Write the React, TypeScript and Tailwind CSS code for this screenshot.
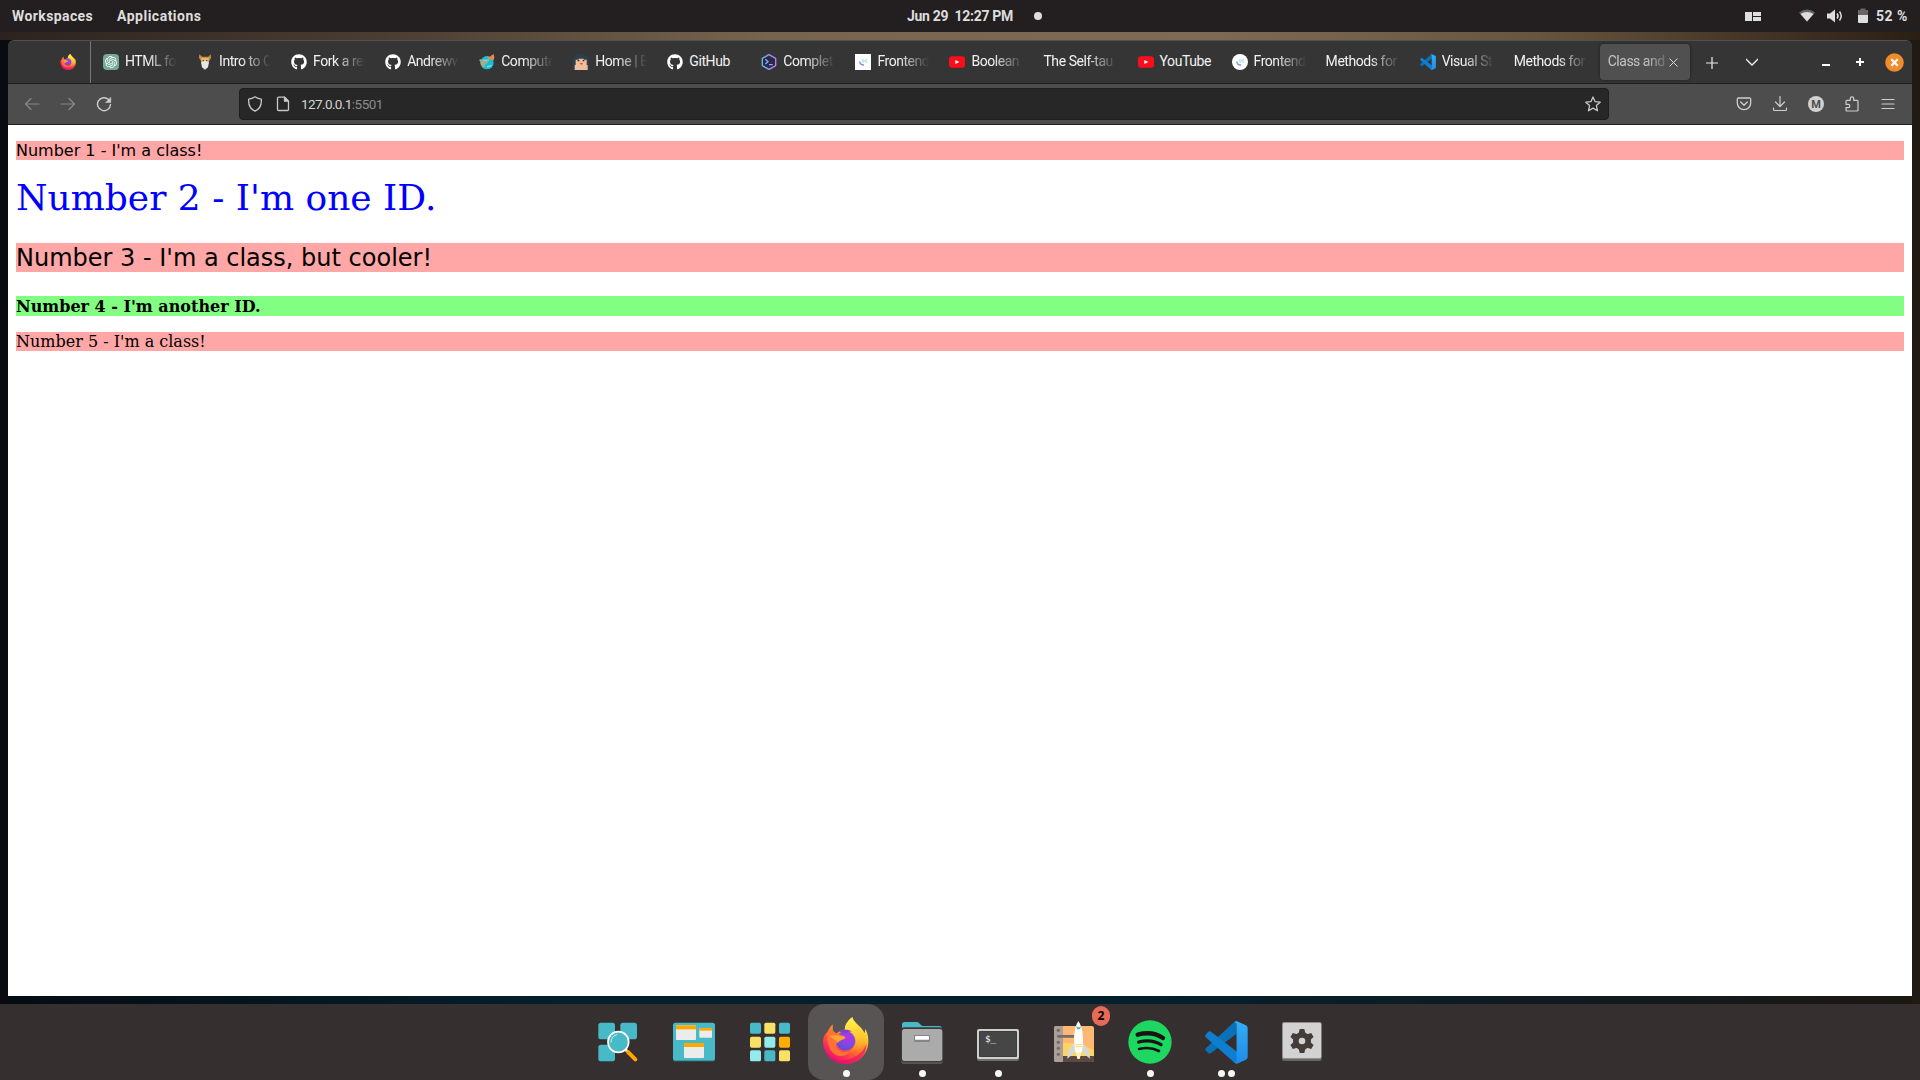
import React from "react";
import { FaGithub } from "react-icons/fa";
import { SiOpenai } from "react-icons/si";

const ui = "font-['Roboto',sans-serif]";

function FirefoxLogo({ className }: { className: string }) {
  return (
    <svg className={className} viewBox="758 82 140 140">
      <defs>
        <linearGradient id="ffBody" x1="0.85" y1="0.1" x2="0.25" y2="0.95">
          <stop offset="0" stopColor="#fff44f" />
          <stop offset="0.3" stopColor="#ffb62b" />
          <stop offset="0.58" stopColor="#ff6b2c" />
          <stop offset="0.82" stopColor="#ff2d52" />
          <stop offset="1" stopColor="#e3107a" />
        </linearGradient>
        <radialGradient id="ffGlobe" cx="0.6" cy="0.3" r="0.75">
          <stop offset="0" stopColor="#b833e1" />
          <stop offset="0.5" stopColor="#8546e8" />
          <stop offset="1" stopColor="#5c4fd0" />
        </radialGradient>
        <linearGradient id="ffFlame" x1="0.5" y1="0" x2="0.6" y2="1">
          <stop offset="0" stopColor="#fff44f" />
          <stop offset="0.6" stopColor="#ffc52e" />
          <stop offset="1" stopColor="#ff9528" stopOpacity="0.2" />
        </linearGradient>
      </defs>
      <path d="M848 83C832 95 826 108 826 120C815 121 806 126 799 133L790 121L790 104C783 109 778 117 775 125C765 133 761 145 761 156C762 194 792 222 828 222C866 222 894 194 896 158C897 140 892 125 886 117C887 124 886 128 884 130C878 112 855 104 848 83Z" fill="url(#ffBody)" />
      <path d="M848 83C832 95 826 108 826 120C846 123 859 136 859 155C859 168 850 181 838 188C866 188 892 160 884 130C878 112 855 104 848 83Z" fill="url(#ffFlame)" />
      <circle cx="828" cy="153" r="29" fill="url(#ffGlobe)" />
      <path d="M810 126C816 120 835 117 848 126C839 124 832 127 829 130Z" fill="#7b3fd6" />
      <path d="M775 125C782 121 790 121 799 130C806 133 814 136 822 139C828 140 829 144 825 147C817 150 810 153 806 158C798 160 798 168 803 175C812 187 829 190 842 183C830 204 796 203 784 181C775 164 770 142 775 125Z" fill="#ff7139" />
      <path d="M781 139C792 134 804 137 822 139C828 140 829 144 825 147C817 150 810 153 806 158C799 153 791 145 781 139Z" fill="#ffa52d" />
      <path d="M764 176C778 207 812 217 841 207C866 199 884 181 890 161C892 196 864 222 828 222C797 222 771 203 764 176Z" fill="#e5106f" opacity="0.65" />
    </svg>
  );
}

function CodeLogo({ className, id }: { className: string; id: string }) {
  return (
    <svg className={className} viewBox="734 92 128 128">
      <defs>
        <linearGradient id={id} x1="0" y1="0" x2="0" y2="1">
          <stop offset="0" stopColor="#33aef5" />
          <stop offset="1" stopColor="#1f8be8" />
        </linearGradient>
      </defs>
      <path d="M829 93L828 130L752 187Q748 190 744 187L736 180Q733 176 737 172L821 95Q825 91 829 93Z" fill="#0a70b8" />
      <path d="M752 124L830 184L829 219Q824 219 820 215L737 141Q733 137 736 133L744 124Q748 121 752 124Z" fill="#0e7fd0" />
      <path d="M829 93L856 105Q861 108 861 113V199Q861 204 856 207L829 219Q824 219 820 215Q828 218 828 209V103Q828 95 820 97Q824 92 829 93Z" fill={`url(#${id})`} />
    </svg>
  );
}

const YouTubeMark = () => (
  <svg className="h-4 w-4" viewBox="0 0 48 48">
    <rect x="0" y="7" width="48" height="34" rx="9" fill="#fc0d1b" />
    <path d="M19 18L31 24L19 30Z" fill="#fff" />
  </svg>
);

const FrontMark = ({ round }: { round: boolean }) => (
  <svg className="h-4 w-4" viewBox="0 0 48 48">
    <rect width="48" height="48" rx={round ? 24 : 0} fill="#fff" />
    <path d="M14 22Q15 33 27 33" fill="none" stroke="#8b93d8" strokeWidth="4" />
    <path d="M24 15V27M36 16L30 21L36 26" fill="none" stroke="#a5e4ea" strokeWidth="4" />
  </svg>
);

const marks: Record<string, React.ReactNode> = {
  ai: (
    <span className="flex h-4 w-4 items-center justify-center rounded-sm bg-[#74a99b] text-white">
      <SiOpenai className="h-3 w-3" />
    </span>
  ),
  odin: (
    <svg className="h-4 w-4" viewBox="0 0 48 48">
      <path d="M7 1L15 8H34L41 1L42 12L36 22H13L6 12Z" fill="#c9913f" />
      <path d="M13 12H35V28H13Z" fill="#e9b66c" />
      <path d="M12 24L24 20L36 24L33 40L24 47L15 40Z" fill="#e8e6e3" />
      <path d="M17 20H21M27 20H31" stroke="#4a3828" strokeWidth="3" />
    </svg>
  ),
  gh: <FaGithub className="h-4 w-4 text-white" />,
  planet: (
    <svg className="h-4 w-4" viewBox="0 0 48 48">
      <circle cx="24" cy="26" r="20" fill="#1fb9d2" />
      <path d="M4 20Q14 12 24 20L27 27L19 30L17 40Q3 38 4 20Z" fill="#a8ad86" />
      <path d="M14 20L30 18M24 39L38 34" stroke="#5fe5ef" strokeWidth="4" />
      <path d="M25 7L32 9L38 4L44 0L46 10L44 19L27 15Z" fill="#e8894a" />
      <circle cx="4" cy="19" r="3" fill="#9ab7b0" />
    </svg>
  ),
  face: (
    <svg className="h-4 w-4" viewBox="0 0 48 48">
      <path d="M0 48V20Q2 0 24 0Q46 0 48 20V48Z" fill="#2b404f" />
      <path d="M8 17H17V14H32V17H41V33H44V48H5V33H8Z" fill="#f0bd9d" />
      <path d="M14 20H19M29 20H34" stroke="#2a2725" strokeWidth="4" />
      <path d="M20 27H30L25 33Z" fill="#d9502b" />
    </svg>
  ),
  hex: (
    <svg className="h-4 w-4" viewBox="0 0 48 48">
      <defs>
        <linearGradient id="hexStroke">
          <stop offset="0" stopColor="#67b8ee" />
          <stop offset="1" stopColor="#c77af0" />
        </linearGradient>
      </defs>
      <path d="M24 2L44 13V35L24 46L4 35V13Z" fill="#272b45" stroke="url(#hexStroke)" strokeWidth="4" strokeLinejoin="round" />
      <path d="M13 16L21 23L13 30M24 32H35" fill="none" stroke="#9aa5f0" strokeWidth="4" />
    </svg>
  ),
  yt: <YouTubeMark />,
  fsq: <FrontMark round={false} />,
  fround: <FrontMark round />,
  code: <CodeLogo className="h-4 w-4" id="codeSmall" />,
};

const tabs: { icon?: string; title: string; fits?: boolean }[] = [
  { icon: "ai", title: "HTML for" },
  { icon: "odin", title: "Intro to C" },
  { icon: "gh", title: "Fork a rep" },
  { icon: "gh", title: "Andreww" },
  { icon: "planet", title: "Compute" },
  { icon: "face", title: "Home | B" },
  { icon: "gh", title: "GitHub", fits: true },
  { icon: "hex", title: "Complet" },
  { icon: "fsq", title: "Frontend" },
  { icon: "yt", title: "Boolean" },
  { title: "The Self-tau" },
  { icon: "yt", title: "YouTube", fits: true },
  { icon: "fround", title: "Frontend" },
  { title: "Methods for" },
  { icon: "code", title: "Visual St" },
  { title: "Methods for" },
];

function TopBar() {
  return (
    <header className={`${ui} grid h-8 shrink-0 grid-cols-3 items-center bg-[#231f20] text-[14px] font-bold text-[#dedede]`}>
      <div className="flex gap-6 pl-3">
        <span className="w-[81px] tracking-[0.4px]">Workspaces</span>
        <span className="tracking-[0.5px]">Applications</span>
      </div>
      <div className="flex items-center gap-[21px] pl-[267px]">
        <span className="w-[106px] tracking-[-0.3px] whitespace-pre">Jun 29  12:27 PM</span>
        <span className="h-2 w-2 rounded-full bg-[#dedede]" />
      </div>
      <div className="flex items-center justify-end pr-3">
        <svg className="mr-[38px] h-4 w-4" viewBox="0 0 16 16" fill="#dedede">
          <path d="M0 4h7v9H0zM8 4h8v4H8zM8 9h8v4H8z" />
        </svg>
        <svg className="mr-3 h-4 w-4" viewBox="0 0 16 16">
          <path d="M0 4.500Q8-1.500 16 4.500L8 13.500Z" fill="#686566" />
          <path d="M1.500 6Q8 2.200 14.500 6L8 13.500Z" fill="#dedede" />
        </svg>
        <svg className="mr-3 h-4 w-4" viewBox="0 0 16 16">
          <path d="M0 5.500h3L8 1.500v13L3 10.500H0z" fill="#dedede" />
          <path d="M10 5.500q2 2.500 0 5" fill="none" stroke="#dedede" strokeWidth="1.500" />
          <path d="M12.500 3.500q3.400 4.500 0 9" fill="none" stroke="#dedede" strokeWidth="1.500" />
        </svg>
        <svg className="mr-[5px] h-4 w-4" viewBox="0 0 16 16">
          <path d="M5.500 0.500h5v1.500h2.500v5H3V2h2.500z" fill="#686566" />
          <path d="M3 7h10v7a1 1 0 0 1-1 1H4a1 1 0 0 1-1-1z" fill="#dedede" />
        </svg>
        <span className="w-8 whitespace-nowrap tracking-[0.5px]">52 %</span>
      </div>
    </header>
  );
}

function TabStrip() {
  return (
    <div className={`${ui} flex h-11 shrink-0 items-center rounded-t-md border-t border-b border-t-[#505050] border-b-[#1f1f1f] bg-[#353535] text-[14px] text-[#f2f2f2]`}>
      <div className="flex h-full w-[83px] items-center justify-end border-r border-[#777] pr-[14px]">
        <FirefoxLogo className="h-4 w-4" />
      </div>
      <div className="ml-1 flex gap-[4.060px]">
        {tabs.map((t, i) => (
          <div key={i} className="flex h-9 w-[90px] items-center gap-[6px] pr-[8px] pl-2">
            {t.icon && <span className="w-4 shrink-0">{marks[t.icon]}</span>}
            <span
              className={
                t.fits
                  ? "-mt-[2px] whitespace-nowrap tracking-[-0.4px]"
                  : "-mt-[2px] min-w-0 flex-1 overflow-hidden whitespace-nowrap tracking-[-0.45px] [mask-image:linear-gradient(to_right,#000_calc(100%-30px),transparent)]"
              }
            >
              {t.title}
            </span>
          </div>
        ))}
        <div className="flex h-9 w-[90px] items-center rounded bg-[#505050] pr-[11px] pl-2 text-[#c4c4c4] shadow-[0_0_3px_rgba(0,0,0,0.5)]">
          <span className="-mt-[2px] w-[58px] overflow-hidden whitespace-nowrap tracking-[-0.5px] [mask-image:linear-gradient(to_right,#000_calc(100%-20px),transparent_calc(100%+6px))]">
            Class and
          </span>
          <svg className="ml-[3px] h-[9px] w-[9px] shrink-0" viewBox="0 0 9 9" stroke="#d8d8d8" fill="none">
            <path d="M.5.500L8.500 8.500M8.500.500L.5 8.500" />
          </svg>
        </div>
      </div>
      <svg className="mt-[1px] ml-[16px] h-3 w-3" viewBox="0 0 12 12" stroke="#eee" strokeWidth="1.200">
        <path d="M6 0V12M0 6H12" />
      </svg>
      <svg className="ml-[28px] h-3 w-3" viewBox="0 0 12 12" stroke="#eee" strokeWidth="1.300" fill="none">
        <path d="M0 3L6 9L12 3" />
      </svg>
      <div className="ml-auto flex items-center pr-[8px]">
        <span className="mt-[6px] mr-[26px] h-[2px] w-2 bg-white" />
        <svg className="mr-[21px] h-2 w-2" viewBox="0 0 8 8" fill="#fff">
          <path d="M3 0h2v3h3v2H5v3H3V5H0V3h3z" />
        </svg>
        <svg className="h-[19px] w-[19px]" viewBox="0 0 19 19">
          <circle cx="9.500" cy="9.500" r="9.300" fill="#f28b2c" />
          <path d="M6.300 6.300L12.700 12.700M12.700 6.300L6.300 12.700" stroke="#fff" strokeWidth="2.200" />
        </svg>
      </div>
    </div>
  );
}

function ToolIcon({ children, dim }: { children: React.ReactNode; dim?: boolean }) {
  return (
    <span className={`flex w-9 items-center justify-center ${dim ? "text-[#888]" : "text-[#cfcfcf]"}`}>
      <svg className="h-4 w-4" viewBox="0 0 16 16" fill="none" stroke="currentColor" strokeWidth="1.200" strokeLinecap="round" strokeLinejoin="round">
        {children}
      </svg>
    </span>
  );
}

function Toolbar() {
  return (
    <div className={`${ui} flex h-[41px] shrink-0 items-center border-b border-[#1f1f1f] bg-[#4d4d4d] px-[6px] text-[14px]`}>
      <div className="flex w-[225px]">
        <ToolIcon dim><path d="M15 8H1.500M7 2.500L1.500 8L7 13.500" /></ToolIcon>
        <ToolIcon dim><path d="M1 8H14.500M9 2.500L14.500 8L9 13.500" /></ToolIcon>
        <ToolIcon>
          <path d="M14.500 8.500A6.500 6.500 0 1 1 12.500 3.500" strokeWidth="1.400" />
          <path d="M14.800 1.500V6.500H9.800Z" fill="currentColor" strokeWidth="0.500" />
        </ToolIcon>
      </div>
      <div className="flex h-8 w-[1370px] items-center rounded border border-[#1e1e1e] bg-[#272727] px-[7px] text-[#c8c8c8]">
        <svg className="h-4 w-4" viewBox="0 0 16 16" fill="none" stroke="currentColor" strokeWidth="1.300" strokeLinejoin="round">
          <path d="M8 .800Q11 2.800 14.300 3.200C14.800 8.500 12.500 13 8 15.200C3.500 13 1.200 8.500 1.700 3.200Q5 2.800 8 .800Z" />
        </svg>
        <svg className="ml-3 h-4 w-4" viewBox="0 0 16 16" fill="none" stroke="currentColor" strokeWidth="1.300" strokeLinejoin="round">
          <path d="M3.500 1.200H9.500L13.500 5.200V13.500a1 1 0 0 1-1 1H3.500a1 1 0 0 1-1-1V2.200a1 1 0 0 1 1-1Z" />
          <path d="M9.500 1.200V5.200H13.500Z" fill="currentColor" />
        </svg>
        <span className="ml-[10px] text-[13.500px] tracking-[-0.600px] text-[#d4d4d4]">127.0.0.1<span className="tracking-[-0.500px] text-[#8b8b8b]">:5501</span></span>
        <svg className="ml-auto h-4 w-4" viewBox="0 0 16 16" fill="none" stroke="currentColor" strokeWidth="1.300" strokeLinejoin="round">
          <path d="M8 1L10.100 5.700L15.200 6.200L11.400 9.600L12.500 14.800L8 12.100L3.500 14.800L4.600 9.600L.800 6.200L5.900 5.700Z" />
        </svg>
      </div>
      <div className="ml-auto flex w-[180px]">
        <ToolIcon>
          <path d="M2.500 2H13.500a1.200 1.200 0 0 1 1.200 1.200V7A6.700 6.700 0 0 1 1.300 7V3.200A1.200 1.200 0 0 1 2.500 2ZM4.700 6L8 9.200L11.300 6" strokeWidth="1.300" />
        </ToolIcon>
        <ToolIcon><path d="M8 .500V10.500M3.500 6L8 10.500L12.500 6M1.500 12V13.500a1 1 0 0 0 1 1H13.500a1 1 0 0 0 1-1V12" /></ToolIcon>
        <span className="flex w-9 items-center justify-center">
          <span className="flex h-4 w-4 items-center justify-center rounded-full bg-[#d0d0d0] text-[11px] leading-none font-bold text-[#4d4d4d]">M</span>
        </span>
        <ToolIcon>
          <path d="M6.300 4.300V2.500a1.700 1.700 0 0 1 3.400 0V4.300H13a1 1 0 0 1 1 1V14a1 1 0 0 1-1 1H3a1 1 0 0 1-1-1V11.700H4.200a1.700 1.700 0 0 0 0-3.400H2V5.300a1 1 0 0 1 1-1Z" />
        </ToolIcon>
        <ToolIcon><path d="M2 3.500H14M2 8H14M2 12.500H14" /></ToolIcon>
      </div>
    </div>
  );
}

function Page() {
  return (
    <main className="flex-1 bg-white px-2 pt-4 text-[16px] text-black">
      <p className="mb-4 h-[19px] bg-[#ffa7a7] font-['DejaVu_Sans',sans-serif] leading-[19px]">Number 1 - I'm a class!</p>
      <p className="mb-6 h-[43px] font-['DejaVu_Serif',serif] text-[36px] leading-[43px] text-[#0000ff]">Number 2 - I'm one ID.</p>
      <p className="mb-6 h-[29px] bg-[#ffa7a7] font-['DejaVu_Sans',sans-serif] text-[24px] leading-[31px]">Number 3 - I'm a class, but cooler!</p>
      <p className="mb-4 h-5 bg-[#82ff82] font-['DejaVu_Serif',serif] leading-[22px] font-bold">Number 4 - I'm another ID.</p>
      <p className="h-[19px] bg-[#ffa7a7] font-['DejaVu_Serif',serif] leading-[19px]">Number 5 - I'm a class!</p>
    </main>
  );
}

const gridCells = [
  [540, 98, "#48b9c7"], [583, 98, "#f9e165"], [627, 98, "#48b9c7"],
  [540, 140, "#f9e165"], [583, 140, "#94ebeb"], [627, 140, "#ffad00"],
  [540, 181, "#94ebeb"], [583, 181, "#48b9c7"], [627, 181, "#f9e165"],
] as const;

function DockCell({ view, dots = 0, active, children }: { view?: string; dots?: number; active?: boolean; children: React.ReactNode }) {
  return (
    <div className={`relative h-[76px] w-[76px] ${active ? "rounded-2xl bg-[#575453]" : ""}`}>
      {view ? <svg className="h-[76px] w-[76px]" viewBox={view}>{children}</svg> : children}
      <div className="absolute inset-x-0 bottom-[3px] flex justify-center gap-[3px]">
        {Array.from({ length: dots }, (_, i) => <span key={i} className="h-[7px] w-[7px] rounded-full bg-[#f7f7f7]" />)}
      </div>
    </div>
  );
}

function Dock() {
  return (
    <footer className="flex h-[76px] shrink-0 justify-center bg-[#35302f]">
      <DockCell view="30 42 228 228">
        <g fill="#48b9c7">
          <rect x="85" y="98" width="50" height="50" rx="8" />
          <rect x="151" y="98" width="50" height="50" rx="8" />
          <rect x="85" y="164" width="50" height="50" rx="8" />
        </g>
        <path d="M163 176L172 184" stroke="#fff" strokeWidth="8" />
        <path d="M174 186L196 208" stroke="#ffa400" strokeWidth="12" strokeLinecap="round" />
        <circle cx="145" cy="156" r="31" fill="#48b9c7" stroke="#fff" strokeWidth="5" />
        <path d="M123 158Q123 138 142 134" fill="none" stroke="#c8f2f5" strokeWidth="3" />
      </DockCell>
      <DockCell view="258 42 228 228">
        <rect x="309" y="99" width="126" height="115" rx="8" fill="#358a95" />
        <rect x="309" y="98" width="126" height="113" rx="8" fill="#48b9c7" />
        {[[318, 106, 60, 44, 12], [388, 114, 38, 29, 8], [342, 159, 60, 45, 12]].map(([x, y, w, h, b]) => (
          <g key={x}>
            <rect x={x} y={y} width={w} height={h} rx="2" fill="#ececec" />
            <rect x={x} y={y} width={w} height={b} fill="#ffa800" />
          </g>
        ))}
      </DockCell>
      <DockCell view="486 42 228 228">
        {gridCells.map(([x, y, c]) => (
          <rect key={`${x}-${y}`} x={x} y={y} width="33" height="33" rx="5" fill={c} />
        ))}
      </DockCell>
      <DockCell active dots={1}>
        <div className="flex h-full items-center justify-center">
          <FirefoxLogo className="mr-px mb-[3px] h-[47px] w-[47px]" />
        </div>
      </DockCell>
      <DockCell view="942 42 228 228" dots={1}>
        <path d="M996 104Q996 96 1004 96H1040Q1046 96 1050 102Q1054 108 1060 108H1108Q1116 108 1116 116V140H996Z" fill="#48b9c7" />
        <rect x="993" y="116" width="126" height="106" rx="10" fill="#575453" />
        <rect x="993" y="112" width="126" height="104" rx="10" fill="#3d3a39" />
        <rect x="996" y="117" width="121" height="96" rx="8" fill="#ababab" />
        <rect x="1032" y="135" width="48" height="21" rx="4" fill="#858585" />
        <rect x="1035" y="138" width="42" height="11" rx="2" fill="#fff" />
      </DockCell>
      <DockCell view="0 42 228 228" dots={1}>
        <rect x="51" y="120" width="126" height="93" rx="6" fill="#6f6f6f" />
        <rect x="51" y="117" width="126" height="90" rx="6" fill="#cfcfcf" />
        <rect x="57" y="123" width="114" height="78" rx="3" fill="#3d3d3d" />
        <rect x="60" y="126" width="108" height="72" fill="#464646" />
        <text x="75" y="157" fontSize="28" fill="#fff" fontFamily="DejaVu Sans Mono, monospace">$_</text>
      </DockCell>
      <DockCell>
        <svg className="h-[76px] w-[76px]" viewBox="228 42 228 228">
          <rect x="282" y="108" width="120" height="108" rx="7" fill="#ffb873" />
          <path d="M309 160Q350 155 402 180V200H309Z" fill="#fbd563" />
          <path d="M309 198H402V209Q402 216 395 216H309Z" fill="#5c4a42" />
          <path d="M289 108H309V216H289Q282 216 282 209V115Q282 108 289 108Z" fill="#aa9e99" />
          <g fill="#756b68">
            <circle cx="295" cy="121" r="5" /><circle cx="295" cy="157" r="5" />
            <circle cx="295" cy="175" r="5" /><circle cx="295" cy="193" r="5" />
            <rect x="291" y="135" width="54" height="8" rx="4" />
          </g>
          <path d="M341 160L323 185L322 206L346 186ZM370 160L388 185L390 206L366 186Z" fill="#d8d8d8" />
          <path d="M355 93C342 112 338 150 347 188H365C373 150 369 112 355 93Z" fill="#fff" />
          <path d="M349 108Q355 116 362 108L361 116Q355 119 350 116Z" fill="#48b9c7" />
          <path d="M346 164H366M346 170H365" stroke="#f9dc6a" strokeWidth="3" />
          <path d="M348 188L352 207H359L364 188Z" fill="#fff2b5" />
        </svg>
        <span className="absolute top-[2px] right-[2px] flex h-5 w-[18px] items-center justify-center rounded-full bg-[#e66a55] font-['Open_Sans',sans-serif] text-[12px] leading-none font-bold text-black">2</span>
      </DockCell>
      <DockCell view="456 42 228 228" dots={1}>
        <circle cx="570" cy="156" r="65" fill="#1ed760" />
        <g fill="none" stroke="#191414" strokeLinecap="round">
          <path d="M533 134Q577 122 609 144" strokeWidth="13" />
          <path d="M536 156Q574 146 603 164" strokeWidth="10" />
          <path d="M537 177Q570 169 597 183" strokeWidth="8" />
        </g>
      </DockCell>
      <DockCell dots={2}>
        <div className="flex h-full items-center justify-center">
          <CodeLogo className="h-[43px] w-[43px]" id="codeLarge" />
        </div>
      </DockCell>
      <DockCell view="912 42 228 228">
        <rect x="966" y="100" width="119" height="113" rx="6" fill="#666" />
        <rect x="966" y="96" width="119" height="111" rx="6" fill="#8f8f8f" />
        <rect x="969" y="99" width="114" height="105" rx="4" fill="#d2d2d2" />
        <g fill="#443c36">
          <circle cx="1026" cy="153" r="27" />
          {[0, 60, 120].map((a) => (
            <path key={a} d="M1019 117H1033L1036 130V176L1033 189H1019L1016 176V130Z" transform={`rotate(${a} 1026 153)`} />
          ))}
        </g>
        <circle cx="1026" cy="153" r="10" fill="#d2d2d2" />
      </DockCell>
    </footer>
  );
}

export default function App() {
  return (
    <div className="flex h-[1080px] w-[1920px] flex-col overflow-hidden">
      <TopBar />
      <div className="flex min-h-0 flex-1 flex-col bg-[linear-gradient(to_right,#050c12,#04202e_30%,#04202e_60%,#1c1713)]">
        <div className="h-2 shrink-0 bg-[linear-gradient(to_right,#2c231f,#4a3d32_20%,#75644f_40%,#7d6b56_62%,#66563f_80%,#47382a_90%,#2b1f14)]" />
        <div className="flex min-h-0 flex-1 bg-[linear-gradient(to_right,#090b10_0_8px,transparent_8px_1912px,#201a14_1912px)] px-2 pb-2">
          <div className="flex flex-1 flex-col">
            <TabStrip />
            <Toolbar />
            <Page />
          </div>
        </div>
      </div>
      <Dock />
    </div>
  );
}
